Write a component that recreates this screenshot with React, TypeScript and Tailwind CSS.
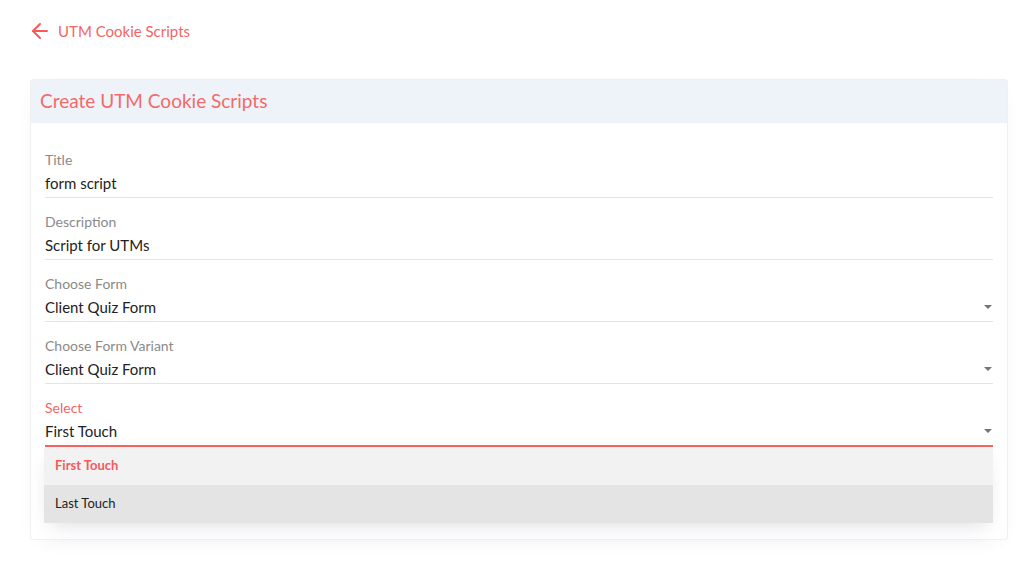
import { ArrowLeft } from "lucide-react";

type Field = {
  label: string;
  value: string;
  select?: boolean;
};

const FIELDS: Field[] = [
  { label: "Title", value: "form script" },
  { label: "Description", value: "Script for UTMs" },
  { label: "Choose Form", value: "Client Quiz Form", select: true },
  { label: "Choose Form Variant", value: "Client Quiz Form", select: true },
];

function Caret({ className = "" }: { className?: string }) {
  return (
    <svg width="8" height="4" viewBox="0 0 8 4" className={className}>
      <path d="M0 0 L8 0 L4 4 Z" fill="#757575" />
    </svg>
  );
}

function FormField({ field }: { field: Field }) {
  return (
    <div className="mb-[15px]">
      <div className="h-[18px] text-[14px] leading-[18px] text-[#8a8a8a]">{field.label}</div>
      <div className="mt-[3px] flex items-center justify-between border-b border-[#e4e4e4] pb-[3px]">
        <span className="h-[22px] text-[15px] leading-[22px] text-[#222]">{field.value}</span>
        {field.select && <Caret className="mr-[1px]" />}
      </div>
    </div>
  );
}

export default function App() {
  return (
    <div className="min-h-[587px] bg-white px-[30px] pt-[19px] [font-family:Lato,'Noto_Sans',sans-serif]">
      <a className="-ml-[2px] flex items-center gap-[6px] text-[15px] leading-[20px] text-[#f46565]">
        <ArrowLeft size={24} strokeWidth={2} className="text-[#f45a5a]" />
        <span>UTM Cookie Scripts</span>
      </a>

      <section className="mt-[36px] w-[978px] rounded-[3px] border border-[#eef0f2] bg-white shadow-[0_6px_22px_-12px_rgba(40,50,90,0.12)]">
        <header className="flex h-[43px] items-center bg-[#edf3f9] pl-[9px]">
          <h1 className="text-[19px] font-normal text-[#f46a6a]">Create UTM Cookie Scripts</h1>
        </header>

        <div className="px-[14px] pt-[28px] pb-[92px]">
          {FIELDS.map((field) => (
            <FormField key={field.label} field={field} />
          ))}

          <div className="relative">
            <div className="h-[18px] text-[14px] leading-[18px] text-[#f46565]">Select</div>
            <div className="mt-[3px] flex items-center justify-between border-b-2 border-[#f46565] pb-[3px]">
              <span className="h-[22px] text-[15px] leading-[22px] text-[#222]">First Touch</span>
              <Caret className="mr-[1px]" />
            </div>

            <ul className="absolute left-[-1px] right-0 top-full z-10 shadow-[0_8px_18px_-6px_rgba(40,50,90,0.15)]">
              <li className="flex h-[38px] items-center bg-[#f2f2f2] pl-[11px] text-[13px] font-bold text-[#f45a5a]">
                First Touch
              </li>
              <li className="flex h-[38px] items-center bg-[#e4e4e4] pl-[11px] text-[13px] text-[#222]">
                Last Touch
              </li>
            </ul>
          </div>
        </div>
      </section>
    </div>
  );
}
